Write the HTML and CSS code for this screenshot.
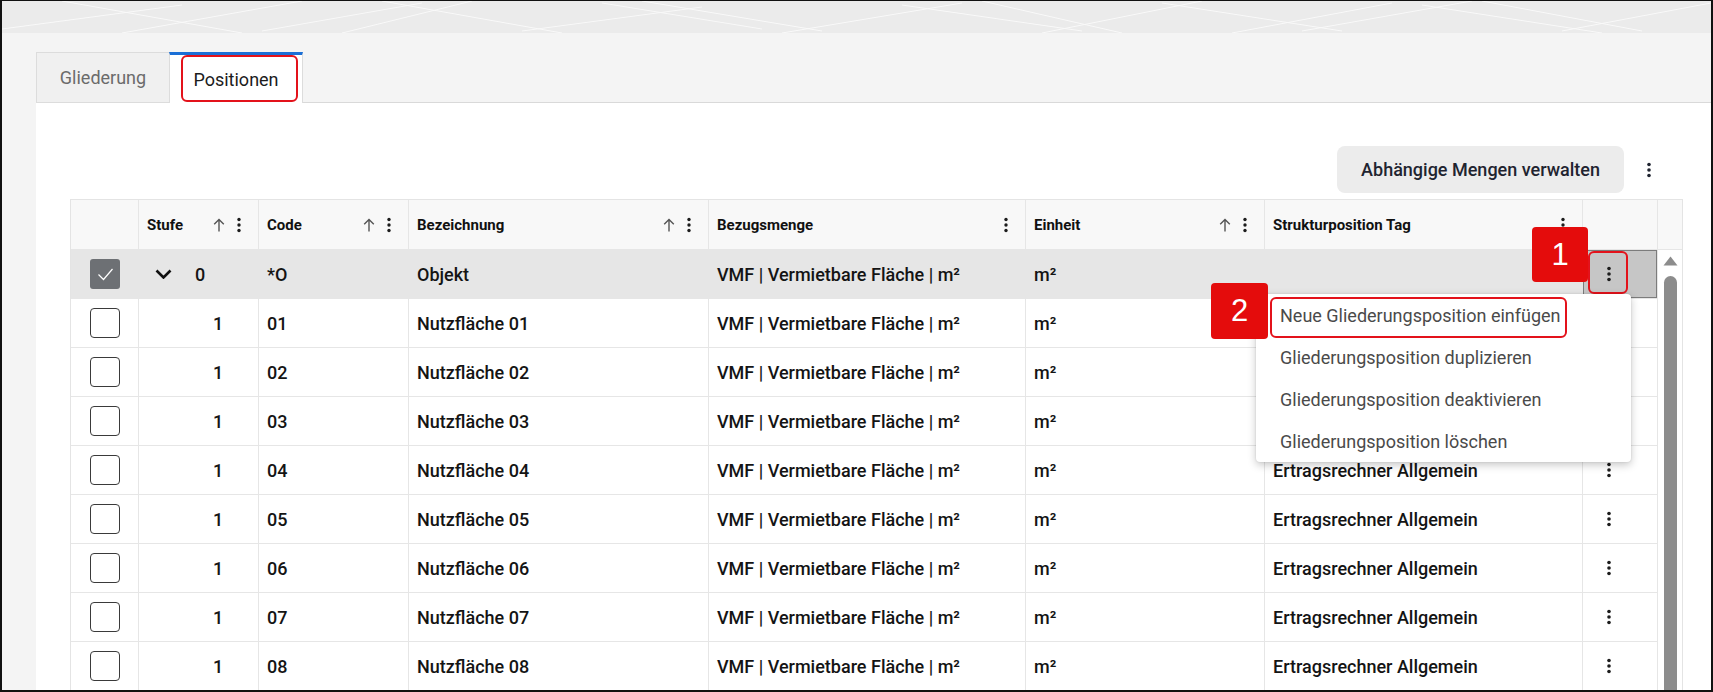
FILE: index.html
```html
<!DOCTYPE html>
<html lang="de">
<head>
<meta charset="utf-8">
<title>Positionen</title>
<link rel="stylesheet" href="styles.css">
</head>
<body>
<div class="screen">
  <div class="topband">
    <svg class="pattern" width="1709" height="32" viewBox="0 0 1709 32" preserveAspectRatio="none">
      <g stroke="#ffffff" stroke-width="1" fill="none" opacity="0.7">
        <path d="M0 28L180 4M120 32L300 0M260 30L420 2M380 0L560 32M520 30L700 6M640 0L820 30M780 32L960 2M900 4L1080 30M1040 32L1200 0M1160 2L1340 30M1300 30L1470 0M1420 4L1600 32M1560 30L1709 2"/>
        <path d="M60 0L240 32M340 32L470 0M600 2L760 28M980 0L1120 32M1230 32L1390 2M1480 0L1640 30"/>
      </g>
    </svg>
  </div>
  <div class="workspace">
    <div class="tabs">
      <div class="tab">Gliederung</div>
      <div class="tab active">Positionen<span class="hl hl-tab"></span></div>
    </div>
    <div class="panel">
      <div class="toolbar">
        <button class="btn">Abhängige Mengen verwalten</button>
        <span class="kebab-btn"><svg width="4" height="16" viewBox="0 0 4 16"><circle cx="2" cy="2.5" r="1.8"/><circle cx="2" cy="8" r="1.8"/><circle cx="2" cy="13.5" r="1.8"/></svg></span>
      </div>
      <div class="grid">
        <div class="rows">
          <div class="row head">
            <div class="cell"></div>
            <div class="cell"><span class="hd">Stufe</span><span class="tools"><svg class="sort" width="12" height="14" viewBox="0 0 12 14"><path d="M6 13.5V1.5M1.2 6.3L6 1.5l4.8 4.8"/></svg><svg class="dots" width="4" height="16" viewBox="0 0 4 16"><circle cx="2" cy="2.5" r="1.7"/><circle cx="2" cy="8" r="1.7"/><circle cx="2" cy="13.5" r="1.7"/></svg></span></div>
            <div class="cell"><span class="hd">Code</span><span class="tools"><svg class="sort" width="12" height="14" viewBox="0 0 12 14"><path d="M6 13.5V1.5M1.2 6.3L6 1.5l4.8 4.8"/></svg><svg class="dots" width="4" height="16" viewBox="0 0 4 16"><circle cx="2" cy="2.5" r="1.7"/><circle cx="2" cy="8" r="1.7"/><circle cx="2" cy="13.5" r="1.7"/></svg></span></div>
            <div class="cell"><span class="hd">Bezeichnung</span><span class="tools"><svg class="sort" width="12" height="14" viewBox="0 0 12 14"><path d="M6 13.5V1.5M1.2 6.3L6 1.5l4.8 4.8"/></svg><svg class="dots" width="4" height="16" viewBox="0 0 4 16"><circle cx="2" cy="2.5" r="1.7"/><circle cx="2" cy="8" r="1.7"/><circle cx="2" cy="13.5" r="1.7"/></svg></span></div>
            <div class="cell"><span class="hd">Bezugsmenge</span><span class="tools"><svg class="dots" width="4" height="16" viewBox="0 0 4 16"><circle cx="2" cy="2.5" r="1.7"/><circle cx="2" cy="8" r="1.7"/><circle cx="2" cy="13.5" r="1.7"/></svg></span></div>
            <div class="cell"><span class="hd">Einheit</span><span class="tools"><svg class="sort" width="12" height="14" viewBox="0 0 12 14"><path d="M6 13.5V1.5M1.2 6.3L6 1.5l4.8 4.8"/></svg><svg class="dots" width="4" height="16" viewBox="0 0 4 16"><circle cx="2" cy="2.5" r="1.7"/><circle cx="2" cy="8" r="1.7"/><circle cx="2" cy="13.5" r="1.7"/></svg></span></div>
            <div class="cell"><span class="hd">Strukturposition Tag</span><span class="tools"><svg class="dots" width="4" height="16" viewBox="0 0 4 16"><circle cx="2" cy="2.5" r="1.7"/><circle cx="2" cy="8" r="1.7"/><circle cx="2" cy="13.5" r="1.7"/></svg></span></div>
            <div class="cell"></div>
          </div>

          <div class="row sel">
            <div class="cell center"><span class="cb checked"><svg width="30" height="30" viewBox="0 0 30 30"><path d="M8.5 15.5l5 5 9-10.5"/></svg></span></div>
            <div class="cell tree"><span class="toggle"><svg width="17" height="10" viewBox="0 0 17 10"><path d="M1.5 1.5l7 7 7-7"/></svg></span><span>0</span></div>
            <div class="cell">*O</div>
            <div class="cell">Objekt</div>
            <div class="cell">VMF | Vermietbare Fläche | m²</div>
            <div class="cell">m²</div>
            <div class="cell"></div>
            <div class="cell act focus"><svg class="dots" width="4" height="16" viewBox="0 0 4 16"><circle cx="2" cy="2.5" r="1.8"/><circle cx="2" cy="8" r="1.8"/><circle cx="2" cy="13.5" r="1.8"/></svg></div>
          </div>

          <div class="row">
            <div class="cell center"><span class="cb"></span></div>
            <div class="cell tree"><span class="indent"></span><span class="toggle"></span><span>1</span></div>
            <div class="cell">01</div><div class="cell">Nutzfläche 01</div><div class="cell">VMF | Vermietbare Fläche | m²</div><div class="cell">m²</div><div class="cell">Ertragsrechner Allgemein</div>
            <div class="cell act"><svg class="dots" width="4" height="16" viewBox="0 0 4 16"><circle cx="2" cy="2.5" r="1.8"/><circle cx="2" cy="8" r="1.8"/><circle cx="2" cy="13.5" r="1.8"/></svg></div>
          </div>
          <div class="row">
            <div class="cell center"><span class="cb"></span></div>
            <div class="cell tree"><span class="indent"></span><span class="toggle"></span><span>1</span></div>
            <div class="cell">02</div><div class="cell">Nutzfläche 02</div><div class="cell">VMF | Vermietbare Fläche | m²</div><div class="cell">m²</div><div class="cell">Ertragsrechner Allgemein</div>
            <div class="cell act"><svg class="dots" width="4" height="16" viewBox="0 0 4 16"><circle cx="2" cy="2.5" r="1.8"/><circle cx="2" cy="8" r="1.8"/><circle cx="2" cy="13.5" r="1.8"/></svg></div>
          </div>
          <div class="row">
            <div class="cell center"><span class="cb"></span></div>
            <div class="cell tree"><span class="indent"></span><span class="toggle"></span><span>1</span></div>
            <div class="cell">03</div><div class="cell">Nutzfläche 03</div><div class="cell">VMF | Vermietbare Fläche | m²</div><div class="cell">m²</div><div class="cell">Ertragsrechner Allgemein</div>
            <div class="cell act"><svg class="dots" width="4" height="16" viewBox="0 0 4 16"><circle cx="2" cy="2.5" r="1.8"/><circle cx="2" cy="8" r="1.8"/><circle cx="2" cy="13.5" r="1.8"/></svg></div>
          </div>
          <div class="row">
            <div class="cell center"><span class="cb"></span></div>
            <div class="cell tree"><span class="indent"></span><span class="toggle"></span><span>1</span></div>
            <div class="cell">04</div><div class="cell">Nutzfläche 04</div><div class="cell">VMF | Vermietbare Fläche | m²</div><div class="cell">m²</div><div class="cell">Ertragsrechner Allgemein</div>
            <div class="cell act"><svg class="dots" width="4" height="16" viewBox="0 0 4 16"><circle cx="2" cy="2.5" r="1.8"/><circle cx="2" cy="8" r="1.8"/><circle cx="2" cy="13.5" r="1.8"/></svg></div>
          </div>
          <div class="row">
            <div class="cell center"><span class="cb"></span></div>
            <div class="cell tree"><span class="indent"></span><span class="toggle"></span><span>1</span></div>
            <div class="cell">05</div><div class="cell">Nutzfläche 05</div><div class="cell">VMF | Vermietbare Fläche | m²</div><div class="cell">m²</div><div class="cell">Ertragsrechner Allgemein</div>
            <div class="cell act"><svg class="dots" width="4" height="16" viewBox="0 0 4 16"><circle cx="2" cy="2.5" r="1.8"/><circle cx="2" cy="8" r="1.8"/><circle cx="2" cy="13.5" r="1.8"/></svg></div>
          </div>
          <div class="row">
            <div class="cell center"><span class="cb"></span></div>
            <div class="cell tree"><span class="indent"></span><span class="toggle"></span><span>1</span></div>
            <div class="cell">06</div><div class="cell">Nutzfläche 06</div><div class="cell">VMF | Vermietbare Fläche | m²</div><div class="cell">m²</div><div class="cell">Ertragsrechner Allgemein</div>
            <div class="cell act"><svg class="dots" width="4" height="16" viewBox="0 0 4 16"><circle cx="2" cy="2.5" r="1.8"/><circle cx="2" cy="8" r="1.8"/><circle cx="2" cy="13.5" r="1.8"/></svg></div>
          </div>
          <div class="row">
            <div class="cell center"><span class="cb"></span></div>
            <div class="cell tree"><span class="indent"></span><span class="toggle"></span><span>1</span></div>
            <div class="cell">07</div><div class="cell">Nutzfläche 07</div><div class="cell">VMF | Vermietbare Fläche | m²</div><div class="cell">m²</div><div class="cell">Ertragsrechner Allgemein</div>
            <div class="cell act"><svg class="dots" width="4" height="16" viewBox="0 0 4 16"><circle cx="2" cy="2.5" r="1.8"/><circle cx="2" cy="8" r="1.8"/><circle cx="2" cy="13.5" r="1.8"/></svg></div>
          </div>
          <div class="row">
            <div class="cell center"><span class="cb"></span></div>
            <div class="cell tree"><span class="indent"></span><span class="toggle"></span><span>1</span></div>
            <div class="cell">08</div><div class="cell">Nutzfläche 08</div><div class="cell">VMF | Vermietbare Fläche | m²</div><div class="cell">m²</div><div class="cell">Ertragsrechner Allgemein</div>
            <div class="cell act"><svg class="dots" width="4" height="16" viewBox="0 0 4 16"><circle cx="2" cy="2.5" r="1.8"/><circle cx="2" cy="8" r="1.8"/><circle cx="2" cy="13.5" r="1.8"/></svg></div>
          </div>
        </div>
        <div class="scroll">
          <div class="scroll-head"></div>
          <svg class="scroll-up" width="15" height="10" viewBox="0 0 15 10"><path d="M7.5 0.5L14.5 9.5H0.5Z"/></svg>
          <div class="thumb"></div>
        </div>

        <span class="hl hl-kebab"></span>
        <div class="menu">
          <div class="item">Neue Gliederungsposition einfügen</div>
          <div class="item">Gliederungsposition duplizieren</div>
          <div class="item">Gliederungsposition deaktivieren</div>
          <div class="item">Gliederungsposition löschen</div>
        </div>
        <span class="hl hl-item"></span>
        <span class="badge badge-1">1</span>
        <span class="badge badge-2">2</span>
      </div>
    </div>
  </div>
</div>
</body>
</html>
```

FILE: styles.css
```css
* { box-sizing: border-box; }
html, body { margin: 0; padding: 0; background: #ffffff; }
body { font-family: Roboto, "Noto Sans", "Liberation Sans", sans-serif; color: #151515; }

.screen {
  width: 1713px;
  height: 692px;
  border: 2px solid #111111;
  border-top-width: 1px;
  display: flex;
  flex-direction: column;
  overflow: hidden;
  background: #f4f4f4;
}

.topband {
  height: 32px;
  flex: none;
  background: #ebebeb;
  overflow: hidden;
}
.pattern { display: block; }

.workspace {
  flex: 1;
  min-height: 0;
  display: flex;
  flex-direction: column;
  padding-left: 34px;
  background: #f4f4f4;
}

.tabs {
  flex: none;
  display: flex;
  align-items: flex-end;
  height: 70px;
  padding-top: 19px;
  border-bottom: 1px solid #d9d9d9;
}
.tab {
  position: relative;
  width: 134px;
  height: 51px;
  margin-bottom: -1px;
  display: flex;
  align-items: center;
  justify-content: center;
  font-size: 18px;
  color: #6b6b6b;
  background: #f0f0f0;
  border: 1px solid #dcdcdc;
}
.tab.active {
  margin-left: -1px;
  color: #1c1c1c;
  background: #ffffff;
  border-top: 3px solid #1a6fd6;
  border-bottom: none;
}

.panel {
  flex: 1;
  min-height: 0;
  background: #ffffff;
  padding: 43px 28px 0 34px;
  overflow: hidden;
}

.toolbar {
  display: flex;
  justify-content: flex-end;
  align-items: center;
  gap: 13px;
  padding-right: 22px;
  height: 47px;
  margin-bottom: 6px;
}
.btn {
  height: 47px;
  padding: 0 24px;
  border: none;
  border-radius: 8px;
  background: #ececec;
  font-family: inherit;
  font-size: 18px;
  font-weight: 500;
  color: #1f2430;
}
.kebab-btn {
  width: 24px;
  display: flex;
  justify-content: center;
}
.kebab-btn svg { fill: #1f2430; }

.grid {
  position: relative;
  display: flex;
  width: 1613px;
  border: 1px solid #e4e4e4;
}
.rows { width: 1587px; flex: none; }

.row {
  display: grid;
  grid-template-columns: 68px 120px 150px 300px 317px 239px 318px 75px;
  height: 49px;
  border-bottom: 1px solid #e6e6e6;
  font-size: 18px;
  font-weight: 500;
  color: #141414;
}
.row.head {
  height: 50px;
  background: #f8f8f8;
  font-size: 15px;
  font-weight: 700;
  color: #111111;
}
.row.sel { background: #e6e6e6; }

.cell {
  display: flex;
  align-items: center;
  padding-left: 8px;
  border-right: 1px solid #e6e6e6;
  white-space: nowrap;
  overflow: hidden;
}
.cell.center { justify-content: center; padding-left: 0; }

.head .cell { justify-content: space-between; padding-right: 17px; }
.tools { display: flex; align-items: center; gap: 12px; }
.sort { fill: none; stroke: #555555; stroke-width: 1.4; }
.dots { fill: #1c1c1c; }

.cb {
  width: 30px;
  height: 30px;
  border: 1px solid #3a3a3a;
  border-radius: 4px;
  background: #ffffff;
  display: block;
}
.cb.checked {
  border: none;
  border-radius: 3px;
  background: #6d7074;
}
.cb svg { display: block; fill: none; stroke: #ffffff; stroke-width: 1.2; }

.tree { padding-left: 16px; }
.toggle { width: 40px; flex: none; display: flex; }
.toggle svg { fill: none; stroke: #111111; stroke-width: 2.6; }
.indent { width: 18px; flex: none; }

.act { padding-left: 24px; }
.act.focus {
  background: #c6c6c6;
  box-shadow: inset 0 0 0 1px #7c7c7c;
}

.scroll {
  width: 24px;
  flex: none;
  display: flex;
  flex-direction: column;
  align-items: center;
}
.scroll-head {
  align-self: stretch;
  height: 50px;
  flex: none;
  background: #f8f8f8;
  border-bottom: 1px solid #e6e6e6;
}
.scroll-up { margin-top: 6px; fill: #8c8c8c; flex: none; }
.thumb {
  margin-top: 10px;
  width: 13px;
  flex: 1;
  border-radius: 7px 7px 0 0;
  background: #8c8c8c;
}

.menu {
  position: absolute;
  left: 1185px;
  top: 94px;
  width: 375px;
  background: #ffffff;
  border-radius: 4px;
  box-shadow: 0 3px 9px rgba(0,0,0,0.22), 0 0 2px rgba(0,0,0,0.12);
  z-index: 2;
}
.item {
  height: 42px;
  display: flex;
  align-items: center;
  padding-left: 24px;
  font-size: 18px;
  font-weight: 400;
  color: #4a4a4a;
}

.hl {
  position: absolute;
  border: 2px solid #e3121b;
  border-radius: 6px;
  z-index: 3;
}
.hl-tab { left: 11px; top: 0px; width: 117px; height: 47px; }
.hl-kebab { left: 1517px; top: 51px; width: 40px; height: 43px; z-index: 1; }
.hl-item { left: 1199px; top: 97px; width: 297px; height: 41px; }

.badge {
  position: absolute;
  z-index: 4;
  display: flex;
  align-items: center;
  justify-content: center;
  background: #e40c0c;
  color: #ffffff;
  border-radius: 4px;
  font-family: "Liberation Sans", Arial, sans-serif;
  font-size: 31px;
  font-weight: 400;
}
.badge-1 { left: 1461px; top: 27px; width: 56px; height: 55px; }
.badge-2 { left: 1140px; top: 83px; width: 57px; height: 56px; }
```
